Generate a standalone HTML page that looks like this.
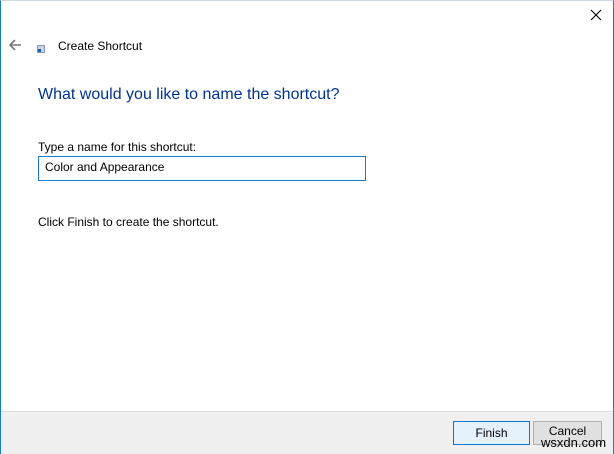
<!DOCTYPE html>
<html><head><style>
body{margin:0;width:614px;height:454px;overflow:hidden;background:#fff;font-family:"Liberation Sans",sans-serif;font-size:12px;color:#000;position:relative}
.frame{position:absolute;left:0;top:0;width:612px;height:452px;border:1px solid #1979ca;border-top:1px solid #cfd8e0}
.abs{position:absolute}
.footer{position:absolute;left:1px;top:411px;width:612px;height:42px;background:#f0f0f0;border-top:1px solid #e0e0e0}
.btn{position:absolute;top:421px;height:22px;line-height:22px;text-align:center;font-size:12px}
</style></head><body>
<div class="frame"></div>
<svg class="abs" style="left:590px;top:9px" width="12" height="12"><path d="M1 1L11 11M11 1L1 11" stroke="#000" stroke-width="1.1"/></svg>
<svg class="abs" style="left:8px;top:39px" width="14" height="12"><path d="M13 6H2M7 1L2 6L7 11" stroke="#777" stroke-width="1.6" fill="none"/></svg>
<div class="abs" style="left:37px;top:45px;width:6px;height:6px;background:#c8d4e4;border:1px solid #8899bb"><div style="width:3px;height:3px;background:#1a5fb4;margin-top:3px"></div></div>
<div class="abs" style="left:58px;top:39px;font-size:12px">Create Shortcut</div>
<div class="abs" style="left:38px;top:86px;font-size:16px;color:#003399">What would you like to name the shortcut?</div>
<div class="abs" style="left:38px;top:140px">Type a name for this shortcut:</div>
<div class="abs" style="left:38px;top:156px;border:1px solid #1979ca;line-height:21px;padding-left:6px;box-sizing:border-box;width:328px;height:25px">Color and Appearance</div>
<div class="abs" style="left:38px;top:215px">Click Finish to create the shortcut.</div>
<div class="footer"></div>
<div class="btn" style="left:453px;width:75px;background:#e5f1fb;border:1px solid #0078d7">Finish</div>
<div class="btn" style="left:533px;width:67px;background:#e1e1e1;border:1px solid #adadad;line-height:18px">Cancel</div>
<div class="abs" style="left:541px;top:436px;font-size:13px;line-height:13px;color:#000">wsxdn.com</div>
</body></html>
